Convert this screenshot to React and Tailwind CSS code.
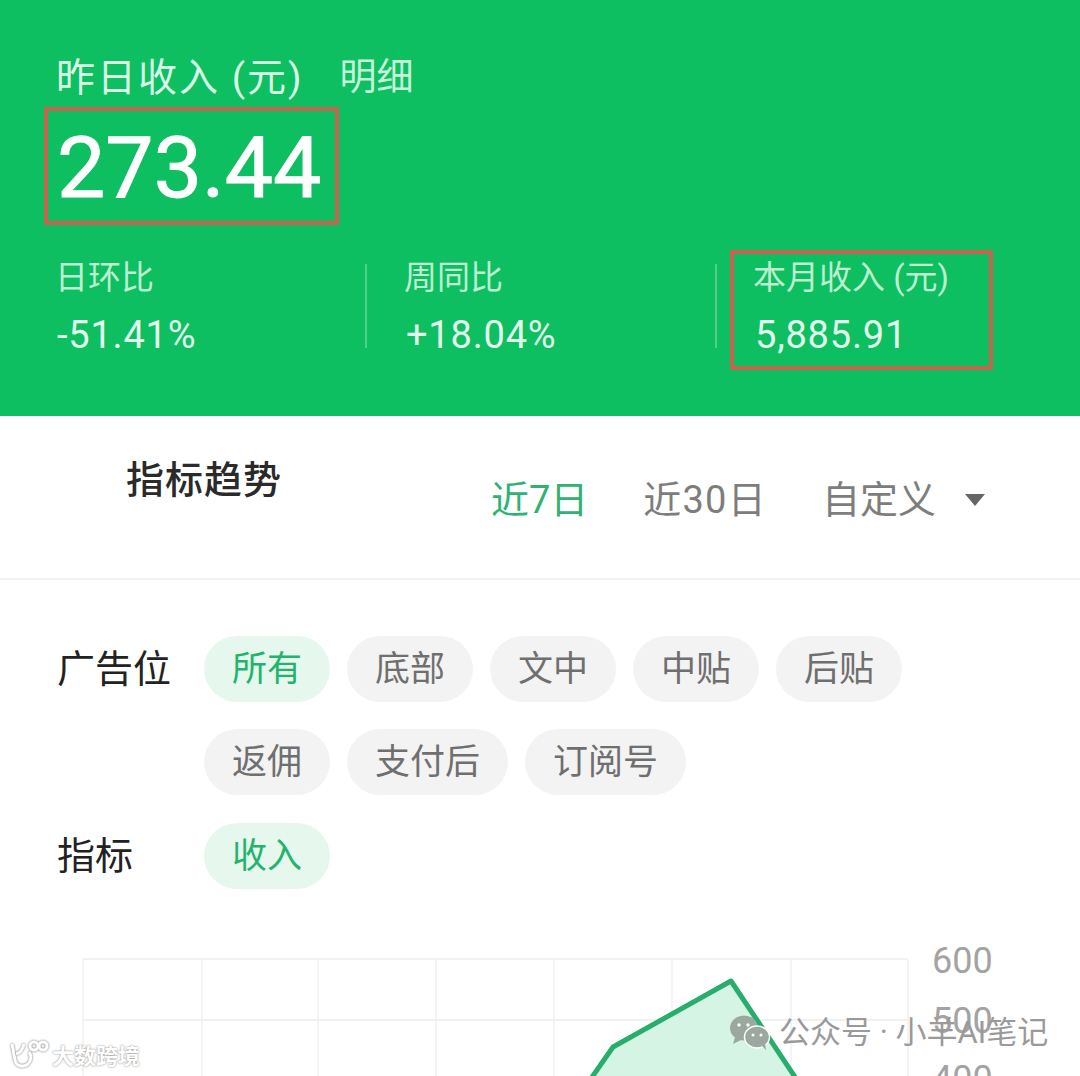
import React from "react";

const font = { fontFamily: '"Roboto","Noto Sans CJK SC",sans-serif' };

const Chip = ({ label, active }) => (
  <div
    className={
      "h-[66px] px-[28px] rounded-full flex items-center text-[35px] leading-none " +
      (active ? "bg-[#e6f8ee] text-[#22b46c]" : "bg-[#f3f3f3] text-[#6f6f6f]")
    }
  >
    {label}
  </div>
);

const Stat = ({ label, value }) => (
  <div>
    <div className="-ml-[2px] text-[33px] leading-[40px] text-[#bdeed2]">{label}</div>
    <div className="mt-[15px] text-[38px] leading-[44px] tracking-[0.8px] text-[#e3f9ed]">{value}</div>
  </div>
);

const Divider = () => <div className="w-[2px] h-[84px] bg-[#4fd08c] self-start mt-[14px]" />;

const Chart = () => {
  const xs = [83, 202, 318, 436, 554, 672, 791, 908];
  const ys = [959, 1020, 1081];
  return (
    <svg className="absolute left-0 top-0" width="1080" height="1076" viewBox="0 0 1080 1076">
      {xs.map((x) => (
        <line key={x} x1={x} y1="959" x2={x} y2="1076" stroke="#f4f4f4" strokeWidth="2" />
      ))}
      {ys.map((y) => (
        <line key={y} x1="83" y1={y} x2="908" y2={y} stroke="#f1f1f1" strokeWidth="2" />
      ))}
      <polygon points="590,1080 613,1047 731,981 797,1080" fill="#d6f4e3" />
      <polyline
        points="590,1080 613,1047 731,981 797,1080"
        fill="none"
        stroke="#27ae6c"
        strokeWidth="5"
        strokeLinejoin="round"
      />
      <text x="932" y="973" fontSize="36" fill="#a3a3a3" style={font}>600</text>
      <text x="932" y="1033" fontSize="36" fill="#a3a3a3" style={font}>500</text>
      <text x="932" y="1091" fontSize="36" fill="#a3a3a3" style={font}>400</text>
    </svg>
  );
};

const WechatMark = () => (
  <svg className="absolute left-[729px] top-[1015px]" width="42" height="36" viewBox="0 0 42 36">
    <ellipse cx="15" cy="13" rx="14" ry="12.5" fill="#9aa8a0" />
    <path d="M6 22l-2 7 8-4z" fill="#9aa8a0" />
    <ellipse cx="28" cy="22" rx="12.5" ry="11" fill="#9aa8a0" stroke="#ffffff" strokeWidth="1.5" />
    <path d="M33 31l4 4-1-7z" fill="#9aa8a0" />
    <circle cx="10" cy="10" r="1.7" fill="#fff" />
    <circle cx="19" cy="10" r="1.7" fill="#fff" />
    <circle cx="24" cy="20" r="1.5" fill="#fff" />
    <circle cx="32" cy="20" r="1.5" fill="#fff" />
  </svg>
);

const KuaMark = () => (
  <svg className="absolute left-[8px] top-[1040px]" width="42" height="30" viewBox="0 0 42 30" fill="none" stroke="#ffffff" strokeWidth="3" style={{ filter: "drop-shadow(0 0 1px #6f6f6f)" }}>
    <path d="M4 4l3 16c1 6 8 8 13 4 3-3 4-8 1-12" />
    <path d="M8 14c4-1 7-5 8-10" />
    <circle cx="26" cy="6" r="4" />
    <circle cx="35" cy="6" r="4" />
  </svg>
);

export default function App() {
  return (
    <div className="relative w-[1080px] h-[1076px] overflow-hidden bg-white" style={font}>
      <header className="h-[416px] bg-[#0dbf60] pl-[57px] pt-[56px]">
        <div className="flex items-center h-[44px] text-[#d9f8e7]">
          <span className="-ml-[1px] text-[39px] leading-[44px] tracking-[2px]">昨日收入 (元)</span>
          <span className="ml-[36px] text-[37px] leading-[44px] text-[#c6f2da]">明细</span>
        </div>
        <div className="mt-[7px] -ml-[13px] w-[295px] h-[118px] border-[4px] border-[#c4654f] pl-[9px] pt-[4px] flex items-center">
          <span className="text-[86px] leading-none text-white [-webkit-text-stroke:1px_white]">273.44</span>
        </div>
        <div className="mt-[25px] flex h-[120px]">
          <div className="w-[308px] pt-[8px]">
            <Stat label="日环比" value="-51.41%" />
          </div>
          <Divider />
          <div className="w-[348px] pl-[39px] pt-[8px]">
            <Stat label="周同比" value="+18.04%" />
          </div>
          <Divider />
          <div className="ml-[13px] w-[263px] h-[120px] border-[4px] border-[#c4654f] pl-[21px] pt-[4px]">
            <Stat label="本月收入 (元)" value="5,885.91" />
          </div>
        </div>
      </header>

      <section className="h-[164px] border-b-2 border-[#f1f1f1] flex">
        <div className="ml-[126px] mt-[41px] text-[38px] leading-[46px] text-[#2a2a2a] font-medium tracking-[1px]">
          指标趋势
        </div>
        <div className="absolute left-[491px] top-[478px] flex items-center text-[38px] leading-[44px]">
          <span className="text-[#2fb274]">近7日</span>
          <span className="ml-[55px] tracking-[1.2px] text-[#7d7d7d]">近30日</span>
          <span className="ml-[55px] text-[#7d7d7d]">自定义</span>
          <span className="ml-[29px] w-0 h-0 border-x-[10px] border-x-transparent border-t-[12px] border-t-[#666666]" />
        </div>
      </section>

      <section className="pl-[57px] pt-[56px]">
        <div className="flex">
          <div className="w-[147px] h-[66px] flex items-center text-[38px] text-[#222222]">广告位</div>
          <div className="w-[720px] flex flex-wrap gap-x-[17px] gap-y-[27px]">
            {["所有", "底部", "文中", "中贴", "后贴", "返佣", "支付后", "订阅号"].map((t, i) => (
              <Chip key={t} label={t} active={i === 0} />
            ))}
          </div>
        </div>
        <div className="flex mt-[28px]">
          <div className="w-[147px] h-[66px] flex items-center text-[38px] text-[#222222]">指标</div>
          <Chip label="收入" active />
        </div>
      </section>

      <Chart />
      <WechatMark />
      <div className="absolute left-[779px] top-[1014px] text-[31px] leading-[38px] text-[#9a9a9a] whitespace-nowrap">
        公众号 · 小羊AI笔记
      </div>
      <KuaMark />
      <div
        className="absolute left-[52px] top-[1043px] text-[22px] leading-[28px] font-bold text-white whitespace-nowrap"
        style={{ textShadow: "0 0 2px #777777" }}
      >
        大数跨境
      </div>
    </div>
  );
}
